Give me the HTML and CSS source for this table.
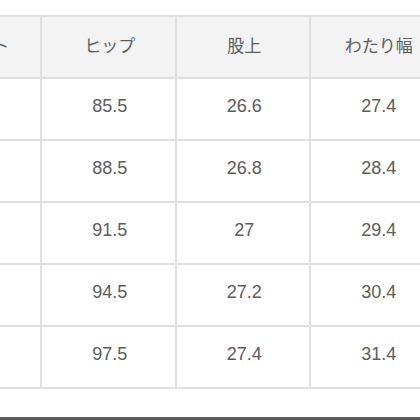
FILE: index.html
```html
<!DOCTYPE html>
<html lang="ja">
<head>
<meta charset="utf-8">
<link rel="stylesheet" href="styles.css">
</head>
<body>
<div class="page">
  <div class="sheet">
    <div class="cell head">ウエスト</div>
    <div class="cell head">ヒップ</div>
    <div class="cell head">股上</div>
    <div class="cell head">わたり幅</div>

    <div class="cell"></div>
    <div class="cell">85.5</div>
    <div class="cell">26.6</div>
    <div class="cell">27.4</div>

    <div class="cell"></div>
    <div class="cell">88.5</div>
    <div class="cell">26.8</div>
    <div class="cell">28.4</div>

    <div class="cell"></div>
    <div class="cell">91.5</div>
    <div class="cell">27</div>
    <div class="cell">29.4</div>

    <div class="cell"></div>
    <div class="cell">94.5</div>
    <div class="cell">27.2</div>
    <div class="cell">30.4</div>

    <div class="cell"></div>
    <div class="cell">97.5</div>
    <div class="cell">27.4</div>
    <div class="cell">31.4</div>
  </div>
  <div class="edge"></div>
</div>
</body>
</html>
```

FILE: styles.css
```css
html, body {
  margin: 0;
  padding: 0;
  background: #ffffff;
}

.page {
  width: 420px;
  height: 420px;
  overflow: hidden;
  display: flex;
  flex-direction: column;
  padding-top: 15px;
  box-sizing: border-box;
}

.sheet {
  display: grid;
  grid-template-columns: repeat(4, 132.5px);
  grid-auto-rows: 60px;
  gap: 2px;
  padding: 2px;
  background: #e0e0e0;
  margin-left: -94.5px;
  width: max-content;
  font-family: "Liberation Sans", "Noto Sans CJK JP", sans-serif;
  color: #5c5c5c;
}

.cell {
  background: #ffffff;
  display: flex;
  align-items: center;
  justify-content: center;
  font-size: 18px;
  padding: 0 0 5px 3px;
}

.head {
  background: #f3f3f3;
  font-size: 17px;
  font-family: "Noto Sans CJK JP", sans-serif;
  color: #5e5e5e;
}

.edge {
  margin-top: auto;
  height: 3px;
  background: #5e5e5e;
}
```
